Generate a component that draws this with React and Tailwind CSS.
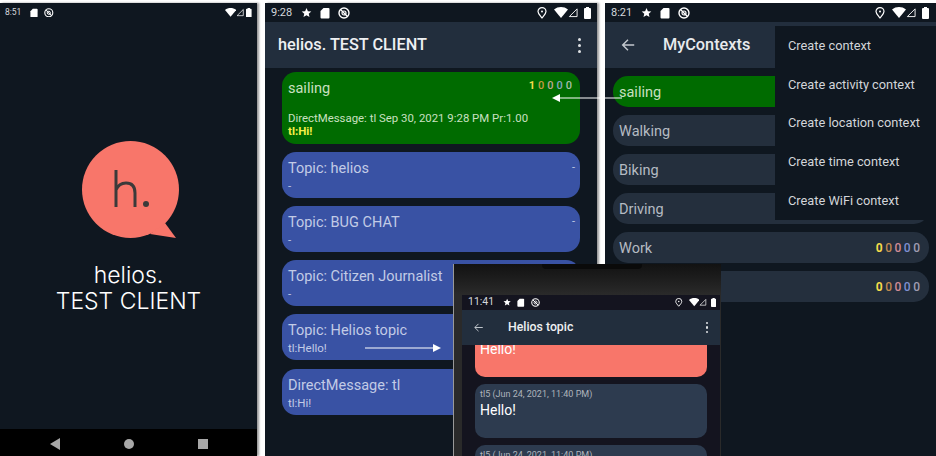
import React from "react";

const Star = ({ s }) => (
  <svg width={11 * s} height={11 * s} viewBox="0 0 24 24" fill="#fff"><path d="M12 2l3 7 7.500.6-5.700 4.900 1.800 7.500L12 18l-6.600 4 1.800-7.500L1.500 9.600 9 9z" /></svg>
);
const Sd = ({ s }) => (
  <svg width={10 * s} height={12 * s} viewBox="0 0 10 12" fill="#fff"><path d="M3.500 1H8.500a1 1 0 0 1 1 1v8.500a1 1 0 0 1-1 1h-7a1 1 0 0 1-1-1V4z" /></svg>
);
const Sync = ({ s }) => (
  <svg width={12 * s} height={12 * s} viewBox="0 0 12 12" fill="none" stroke="#fff"><circle cx="6" cy="6" r="5" strokeWidth="1.400" /><circle cx="6" cy="6" r="2" strokeWidth="1.200" /><path d="M2.500 2.500l7 7" strokeWidth="1.300" /></svg>
);
const Pin = ({ s }) => (
  <svg width={10 * s} height={12 * s} viewBox="0 0 10 12" fill="none" stroke="#fff" strokeWidth="1.200"><path d="M5 11C3 8.500 1 6.800 1 4.600a4 4 0 0 1 8 0C9 6.800 7 8.500 5 11z" /><circle cx="5" cy="4.500" r="1" fill="#fff" stroke="none" /></svg>
);
const Wifi = ({ s }) => (
  <svg width={14 * s} height={11 * s} viewBox="0 0 14 11" fill="#fff"><path d="M0 2.500C4-.8 10-.8 14 2.500L7 11z" /></svg>
);
const Signal = ({ s }) => (
  <svg width={10 * s} height={11 * s} viewBox="0 0 11 11" fill="none" stroke="#fff" strokeWidth="1"><path d="M10 1.500V10H1.500z" /></svg>
);
const Battery = ({ s }) => (
  <svg width={7 * s} height={12 * s} viewBox="0 0 7 12" fill="#fff"><path d="M2 1V0h3v1h1a1 1 0 0 1 1 1v9a1 1 0 0 1-1 1H1a1 1 0 0 1-1-1V2a1 1 0 0 1 1-1z" /></svg>
);
const Back = ({ size = 16 }) => (
  <svg width={size} height={size} viewBox="0 0 18 18" fill="none" stroke="#c3c8ce" strokeWidth="1.600"><path d="M16 9H3M9 3L3 9l6 6" /></svg>
);
const Dots = ({ small }) => (
  <div className={small ? "flex flex-col gap-[2px]" : "flex flex-col gap-[3px]"}>
    <span className={small ? "h-[2.500px] w-[2.500px] rounded-full bg-[#dfe2e5]" : "h-[3px] w-[3px] rounded-full bg-[#dfe2e5]"} />
    <span className={small ? "h-[2.500px] w-[2.500px] rounded-full bg-[#dfe2e5]" : "h-[3px] w-[3px] rounded-full bg-[#dfe2e5]"} />
    <span className={small ? "h-[2.500px] w-[2.500px] rounded-full bg-[#dfe2e5]" : "h-[3px] w-[3px] rounded-full bg-[#dfe2e5]"} />
  </div>
);

const Status = ({ time, full = true, cls = "", s = 1, timeCls = "text-[11px]", gap = "gap-[8px]", batt = "ml-[6px]", pin = "mr-[7px]" }) => (
  <div className={`flex shrink-0 items-center text-white ${cls}`}>
    <span className={`leading-none text-[#d5d8dc] ${timeCls}`}>{time}</span>
    <span className={`ml-[9px] flex items-center ${gap}`}>
      {full && <Star s={s} />}
      <Sd s={s} />
      <Sync s={s} />
    </span>
    <span className="ml-auto flex items-center">
      {full && <span className={`flex ${pin}`}><Pin s={s} /></span>}
      <Wifi s={s} />
      <Signal s={s} />
      <span className={`flex ${batt}`}><Battery s={s} /></span>
    </span>
  </div>
);

const Digits = () => (
  <span className="flex gap-[2.500px] text-[12px] font-medium leading-none">
    <span className="font-bold text-[#f5dc4a]">0</span>
    <span className="text-[#c08a50]">0</span>
    <span className="text-[#d08b96]">0</span>
    <span className="text-[#7f8fd0]">0</span>
    <span className="text-[#a09cb0]">0</span>
  </span>
);

const Topic = ({ title, sub, dash, cls = "" }) => (
  <div className={`flex h-[46px] shrink-0 flex-col rounded-[14px] bg-[#3952a4] pl-[6px] pr-[5px] pt-[8px] text-[#c2cbe6] ${cls}`}>
    <div className="flex justify-between text-[14.500px] leading-[18px]">
      <span>{title}</span>
      {dash && <span className="pt-[2px] text-[11px] leading-[12px]">-</span>}
    </div>
    <span className="text-[11.500px] leading-[16px]">{sub}</span>
  </div>
);

const Ctx = ({ label, cls = "bg-[#242f3d] text-[#b5bbc3]", digits }) => (
  <div className={`flex h-[31px] shrink-0 items-center justify-between rounded-[15px] pl-[6px] pr-[9px] text-[14.500px] ${cls}`}>
    <span className="pt-[2px]">{label}</span>
    {digits && <Digits />}
  </div>
);

const Item = ({ children }) => (
  <div className="flex h-[38.750px] items-center whitespace-nowrap">{children}</div>
);

export default function App() {
  return (
    <div className="relative flex h-[456px] w-[936px] overflow-hidden bg-white pt-[3px] font-['Roboto',sans-serif]">
      {/* Splash */}
      <div className="flex h-full w-[257px] shrink-0 flex-col bg-[#0f1720] shadow-[2px_0_2px_#999]">
        <Status time="8:51" full={false} s={0.8} timeCls="text-[8.500px]" gap="gap-[6px]" batt="ml-[2px]" cls="h-[19px] pl-[5px] pr-[5px]" />
        <div className="flex flex-1 flex-col items-center pt-[118px]">
          <svg width="100" height="100" viewBox="0 0 100 100" className="ml-[3px] block">
            <circle cx="50.500" cy="49.500" r="48.500" fill="#f8766a" />
            <path d="M85 83L96 98L70 94z" fill="#f8766a" />
            <path d="M36 30v37M36 50c2-5 6-7 10-7c7 0 9 4 9 10v14" fill="none" stroke="#3b3a3a" strokeWidth="3" />
            <circle cx="66" cy="64" r="3" fill="#3b3a3a" />
          </svg>
          <div className="mt-[22px] text-center font-['Inter',sans-serif] text-[23px] font-light leading-[26px] text-white">
            <div>helios.</div>
            <div className="whitespace-nowrap">TEST CLIENT</div>
          </div>
        </div>
        <div className="flex h-[27px] shrink-0 items-center justify-center gap-[64px] bg-black pt-[3px]">
          <svg width="10" height="12" viewBox="0 0 10 12" fill="#a8a8a8"><path d="M0 6L10 0v12z" /></svg>
          <span className="h-[10px] w-[10px] rounded-full bg-[#a8a8a8]" />
          <span className="h-[10px] w-[10px] bg-[#a8a8a8]" />
        </div>
      </div>

      {/* Topics */}
      <div className="ml-[8px] flex h-full w-[332px] shrink-0 flex-col bg-[#0f1720] shadow-[2px_0_2px_#999]">
        <Status time="9:28" cls="h-[19px] pl-[6px] pr-[6px]" />
        <div className="flex h-[46px] shrink-0 items-center justify-between bg-[#222e3d] pl-[13px] pr-[16px]">
          <span className="text-[16.300px] font-medium text-[#eef0f2]">helios. TEST CLIENT</span>
          <Dots />
        </div>
        <div className="flex flex-col gap-[8px] pl-[17px] pr-[17px] pt-[4px]">
          <div className="flex h-[72px] shrink-0 flex-col rounded-[14px] bg-[#006b00] px-[6px] pt-[8px] text-[#c9e0c0]">
            <div className="flex justify-between">
              <span className="text-[14.500px] leading-[18px]">sailing</span>
              <span className="flex gap-[3px] pr-[2px] text-[11px] font-medium leading-[12px]">
                <span className="font-bold text-[#f5dc4a]">1</span>
                <span className="text-[#c99a40]">0</span>
                <span className="text-[#c0a890]">0</span>
                <span className="text-[#8aa8c0]">0</span>
                <span className="text-[#a8c0a8]">0</span>
              </span>
            </div>
            <div className="mt-[14px] whitespace-nowrap text-[11.400px] leading-[13px]">DirectMessage: tl Sep 30, 2021 9:28 PM Pr:1.00</div>
            <div className="text-[11.500px] font-bold leading-[12px] text-[#f5ee4a]">tl:Hi!</div>
          </div>
          <Topic title="Topic: helios" sub="-" dash />
          <Topic title="Topic: BUG CHAT" sub="-" dash />
          <Topic title="Topic: Citizen Journalist" sub="-" />
          <Topic title="Topic: Helios topic" sub="tl:Hello!" />
          <Topic title="DirectMessage: tl" sub="tl:Hi!" cls="mt-[1px]" />
        </div>
      </div>

      {/* Contexts */}
      <div className="relative ml-[8px] flex h-full flex-1 flex-col bg-[#0f1720]">
        <Status time="8:21" cls="h-[19px] pl-[6px] pr-[7px]" />
        <div className="flex h-[46px] shrink-0 items-center bg-[#222e3d] pl-[15px]">
          <Back />
          <span className="ml-[27px] text-[16.300px] font-medium text-[#e8eaed]">MyContexts</span>
        </div>
        <div className="flex flex-col gap-[8px] pl-[8px] pr-[7px] pt-[8px]">
          <Ctx label="sailing" cls="bg-[#006b00] text-[#c9e0c0]" />
          <Ctx label="Walking" />
          <Ctx label="Biking" />
          <Ctx label="Driving" />
          <Ctx label="Work" digits />
          <Ctx label="" digits />
        </div>
        {/* Overflow menu */}
        <div className="absolute left-[170px] top-[23px] flex h-[194px] w-[161px] flex-col bg-[#0f1720] pl-[13px] text-[12.800px] text-[#d2d5d9]">
          <Item>Create context</Item>
          <Item>Create activity context</Item>
          <Item>Create location context</Item>
          <Item>Create time context</Item>
          <Item>Create WiFi context</Item>
        </div>
      </div>

      {/* Annotation arrows */}
      <svg width="70" height="12" viewBox="0 0 70 12" className="absolute left-[552px] top-[92px]">
        <path d="M7 6h63" stroke="#fff" strokeWidth="1.200" />
        <path d="M0 6l8-4v8z" fill="#fff" />
      </svg>
      <svg width="78" height="12" viewBox="0 0 78 12" className="absolute left-[365px] top-[342px]">
        <path d="M0 6h70" stroke="#fff" strokeWidth="1.200" />
        <path d="M76 6l-8-4v8z" fill="#fff" />
      </svg>

      {/* Phone overlay */}
      <div className="absolute left-[453px] top-[264px] flex h-[192px] w-[268px] flex-col border-l border-[#999] bg-[#262626] bg-gradient-to-b from-[#121212] to-[#2a2a2a] to-[16%] pl-[8px] pr-[1px]">
        <div className="absolute left-[88px] top-0 h-[5px] w-[100px] rounded-b-[4px] bg-[#0a0a0a]" />
        <div className="mt-[31px] flex min-h-0 flex-1 flex-col bg-[#14141f]">
          <Status time="11:41" s={0.75} timeCls="text-[10.500px]" gap="gap-[6px]" batt="ml-[4px]" pin="mr-[6px]" cls="h-[15px] pl-[6px] pr-[4px]" />
          <div className="flex h-[35px] shrink-0 items-center bg-[#222e3d] pl-[11px] pr-[12px]">
            <Back size={11} />
            <span className="ml-[24px] text-[12.300px] font-medium text-[#eef0f2]">Helios topic</span>
            <span className="ml-auto"><Dots small /></span>
          </div>
          <div className="flex min-h-0 flex-1 flex-col gap-[7px] overflow-hidden px-[13px]">
            <div className="flex h-[32px] shrink-0 flex-col overflow-hidden rounded-b-[10px] bg-[#f8766a] pl-[5px] text-[14px] leading-[8px] text-white">Hello!</div>
            <div className="flex h-[54px] shrink-0 flex-col rounded-[10px] bg-[#2d3b4f] pl-[5px] pt-[3px]">
              <span className="text-[9px] leading-[14px] text-[#aeb4bc]">tl5 (Jun 24, 2021, 11:40 PM)</span>
              <span className="text-[14px] leading-[18px] text-white">Hello!</span>
            </div>
            <div className="flex h-[54px] shrink-0 flex-col rounded-[10px] bg-[#2d3b4f] pl-[5px] pt-[3px]">
              <span className="text-[9px] leading-[14px] text-[#aeb4bc]">tl5 (Jun 24, 2021, 11:40 PM)</span>
            </div>
          </div>
        </div>
      </div>
    </div>
  );
}
